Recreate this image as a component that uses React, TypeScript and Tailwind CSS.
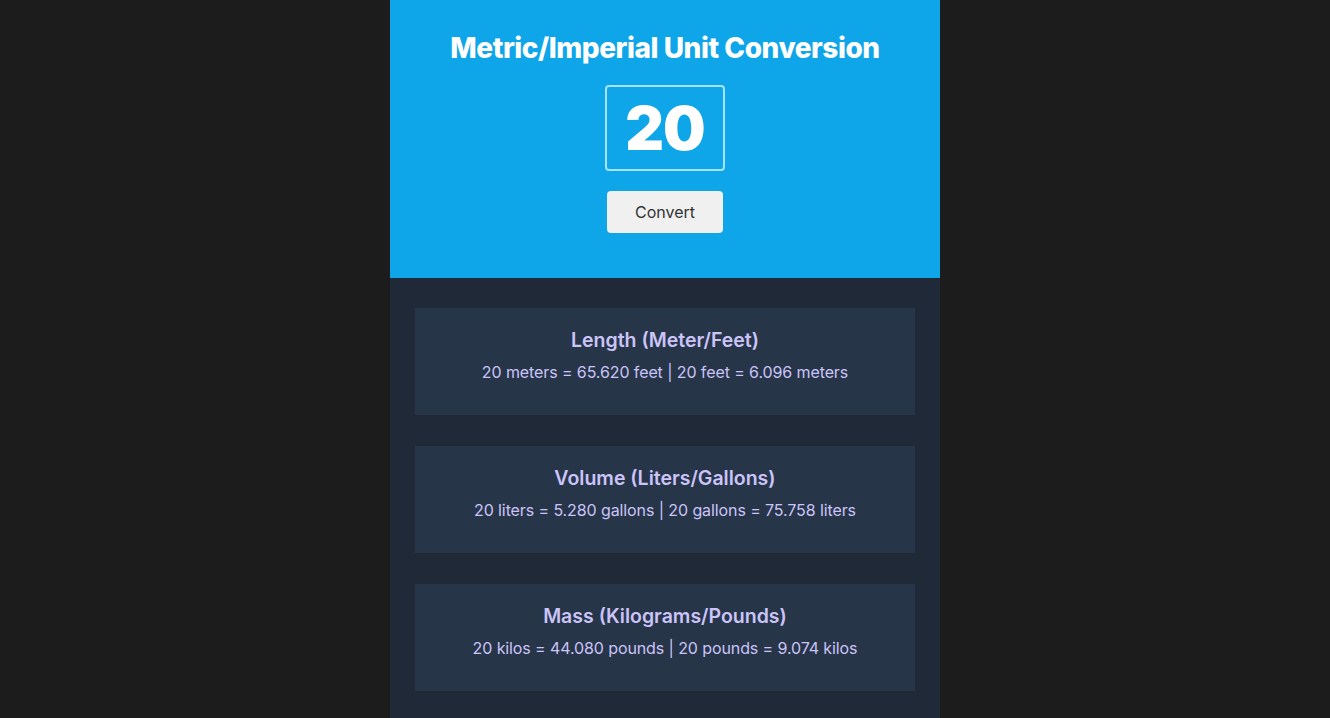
import React from "react";

const items = [
  { title: "Length (Meter/Feet)", a: "20 meters = 65.620 feet", b: "20 feet = 6.096 meters" },
  { title: "Volume (Liters/Gallons)", a: "20 liters = 5.280 gallons", b: "20 gallons = 75.758 liters" },
  { title: "Mass (Kilograms/Pounds)", a: "20 kilos = 44.080 pounds", b: "20 pounds = 9.074 kilos" },
];

export default function App() {
  return (
    <div className="min-h-screen bg-[#1c1c1c] flex justify-center" style={{ fontFamily: "Inter, 'Noto Sans', sans-serif" }}>
      <div className="w-[550px] bg-[#1f2937] flex flex-col">
        <div className="bg-[#0ea5e9] h-[278px] flex flex-col items-center pt-[30px]">
          <h1 className="text-white text-[28px] font-extrabold leading-[36px] tracking-[-0.45px]">Metric/Imperial Unit Conversion</h1>
          <div className="mt-[19px] w-[120px] h-[86px] border-2 border-[#a5e3fb] rounded-[4px] flex items-center justify-center">
            <span className="text-white text-[60px] font-black leading-none tracking-[-1px]">20</span>
          </div>
          <button className="mt-[20px] w-[116px] h-[42px] bg-[#f0f0f0] rounded-[4px] text-[#333333] text-[16px]">Convert</button>
        </div>
        <div className="flex flex-col gap-[31px] px-[25px] pt-[30px] pb-[40px]">
          {items.map((it) => (
            <div key={it.title} className="bg-[#273549] h-[107px] flex flex-col items-center pt-[19px] text-[#cbc4f8]">
              <h2 className="text-[19.5px] font-semibold leading-[26px]">{it.title}</h2>
              <p className="text-[16px] leading-[24px] mt-[7px] tracking-[-0.1px]">
                {it.a} <span>|</span> {it.b}
              </p>
            </div>
          ))}
        </div>
      </div>
    </div>
  );
}
